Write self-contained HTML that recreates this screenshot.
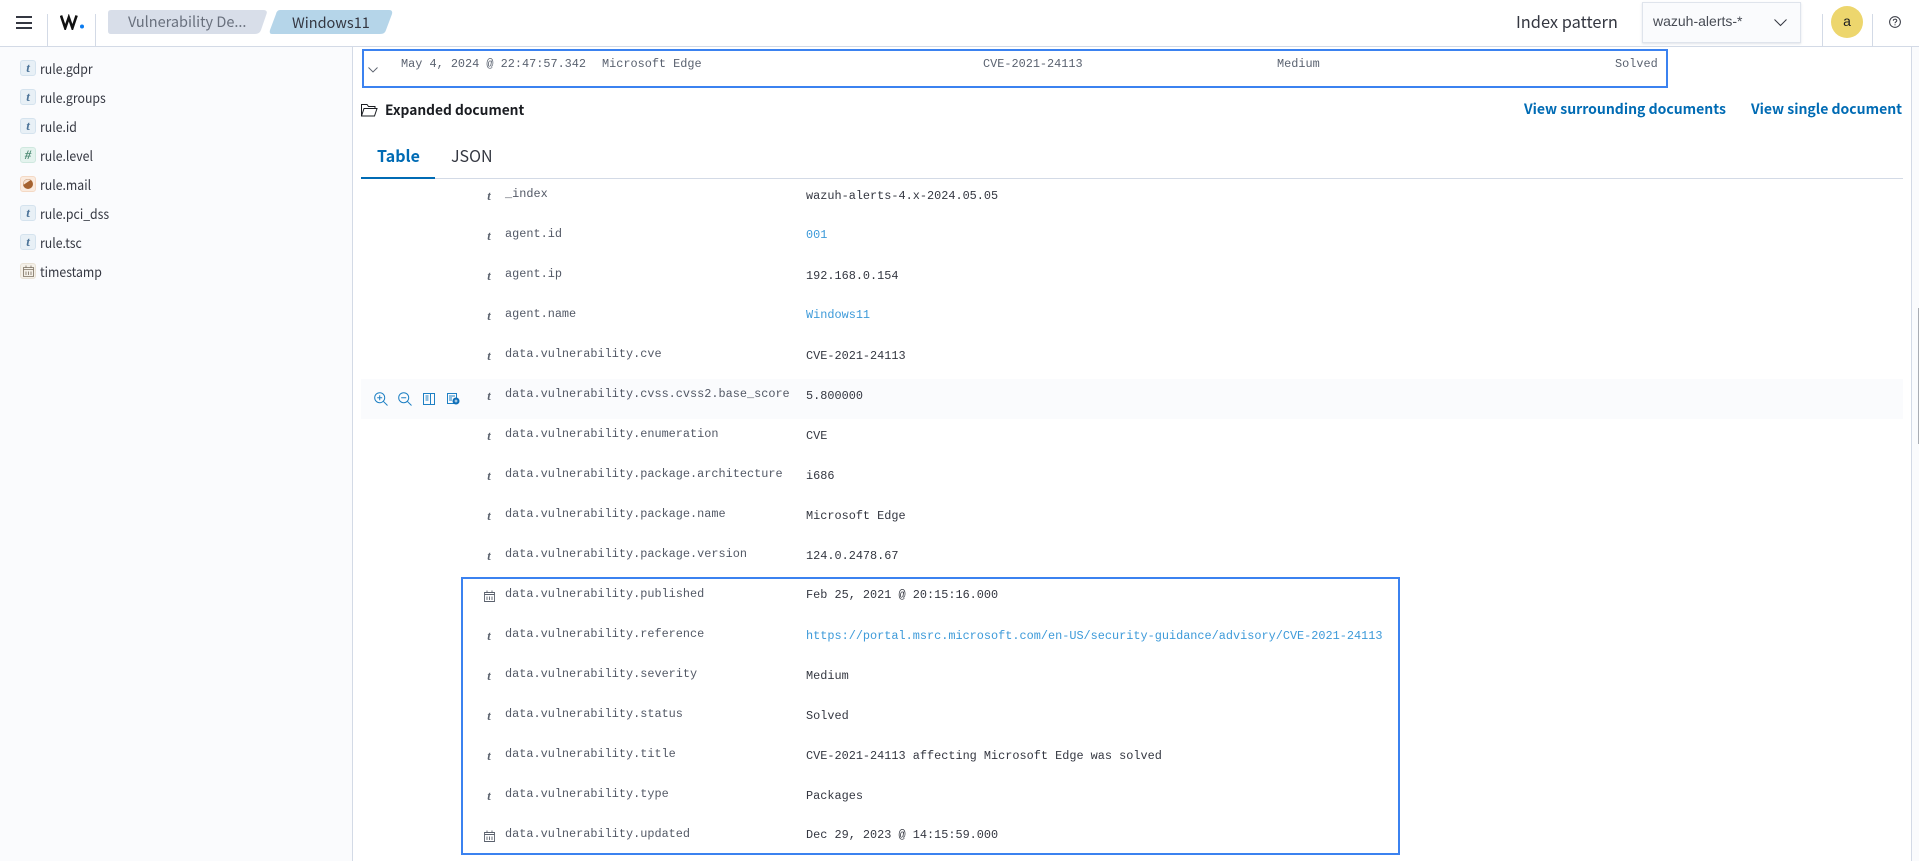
<!DOCTYPE html>
<html><head><meta charset="utf-8"><title>Discover</title>
<style>
html,body{margin:0;padding:0;background:#fff}
body{width:1919px;height:861px;overflow:hidden;position:relative;font-family:"Noto Sans CJK JP","Liberation Sans",sans-serif;color:#343741}
.a{position:absolute;white-space:nowrap}
.m{font-family:"Liberation Mono",monospace;font-size:11.87px;line-height:14px;white-space:pre}
.k{left:505px;color:#535966}
.v{left:806px;color:#343741}
.l{color:#3d9ad9}
.ti{left:486px;font:italic bold 12.5px/12px "Liberation Serif",serif;color:#5a616d;width:6px;text-align:center;transform:translateY(-1px)}
.si{position:absolute;left:20px;width:14px;height:14px;border:1px solid #d5e3ee;border-radius:3px;background:#e8f0f6;color:#4b7398;font:italic bold 13px/14px "Liberation Serif",serif;text-align:center}
.st{position:absolute;left:40px;font-size:13.5px;line-height:20px;color:#343741;transform:scaleX(.91);transform-origin:0 50%;white-space:nowrap}
.box{position:absolute;border:2px solid #3b82f0;box-sizing:border-box}
.d{position:absolute;width:1px;background:#d3dae6}
svg{position:absolute;display:block}
</style></head><body>

<!-- sidebar -->
<div class="a" style="left:0;top:47px;width:352px;height:814px;background:#fafbfd"></div>
<div class="a" style="left:352px;top:47px;width:1px;height:814px;background:#d3dae6"></div>
<div class="a" style="left:1911px;top:47px;width:1px;height:814px;background:#d3dae6"></div>
<div class="a" style="left:1912px;top:47px;width:7px;height:814px;background:#fafbfd"></div>
<div class="a" style="left:1918px;top:308px;width:1px;height:136px;background:#a9adb4"></div>

<!-- top bar -->
<div class="a" style="left:0;top:46px;width:1919px;height:1px;background:#d3dae6"></div>
<div class="a" style="left:16px;top:16px;width:16px;height:2px;background:#343741"></div>
<div class="a" style="left:16px;top:21.5px;width:16px;height:2px;background:#343741"></div>
<div class="a" style="left:16px;top:27px;width:16px;height:2px;background:#343741"></div>
<div class="d" style="left:47px;top:14px;height:32px"></div>
<div class="d" style="left:95px;top:14px;height:32px"></div>
<svg style="left:60px;top:14px" width="25" height="16" viewBox="0 0 25 16"><path d="M1 1.500 5.200 14 8.800 3.500 12.400 14 16.600 1.500" fill="none" stroke="#111" stroke-width="2.600"/><circle cx="22" cy="12.500" r="2" fill="#0a7bf0"/></svg>
<svg style="left:108px;top:10px" width="160" height="24" viewBox="0 0 160 24"><path d="M3 0H155Q160 0 158.500 4L153 20Q151.500 24 147 24H3Q0 24 0 21V3Q0 0 3 0Z" fill="#d8dee9"/></svg>
<div class="a" style="left:128px;top:11px;font-size:14.5px;line-height:22px;color:#69707d">Vulnerability De...</div>
<svg style="left:269px;top:10px" width="124" height="24" viewBox="0 0 124 24"><path d="M11 0H120Q124 0 123 4L117 20Q116 24 111 24H3Q0 24 1 20L7 4Q8 0 11 0Z" fill="#b5d5e9"/></svg>
<div class="a" style="left:292px;top:12px;font-size:14.500px;line-height:22px;color:#343741">Windows11</div>
<div class="a" style="left:1516px;top:8px;font-size:16.4px;line-height:26px;color:#343741">Index pattern</div>
<div class="a" style="left:1642px;top:2px;width:157px;height:39px;background:#fafbfd;border:1px solid #dfe4ec;box-shadow:0 1px 2px rgba(152,162,179,.3)"></div>
<div class="a" style="left:1653px;top:12px;font:14px/18px 'Liberation Sans',sans-serif;color:#484c55">wazuh-alerts-*</div>
<svg style="left:1774px;top:18px" width="13" height="9" viewBox="0 0 13 9"><path d="M.5 1.500 6.500 7.500 12.500 1.500" fill="none" stroke="#343741" stroke-width="1"/></svg>
<div class="d" style="left:1822px;top:14px;height:32px"></div>
<div class="d" style="left:1872px;top:14px;height:32px"></div>
<div class="a" style="left:1831px;top:6px;width:32px;height:32px;border-radius:50%;background:#edd66d;text-align:center;font:14px/31px 'Liberation Sans',sans-serif;color:#1a1c21">a</div>
<svg style="left:1889px;top:16px" width="12" height="12" viewBox="0 0 12 12"><circle cx="6" cy="6" r="5.400" fill="none" stroke="#343741" stroke-width="1"/><path d="M4.300 4.700C4.300 2.700 7.800 2.700 7.800 4.600 7.800 5.900 6 5.800 6 7.300" fill="none" stroke="#343741" stroke-width="1"/><rect x="5.500" y="8.300" width="1" height="1" fill="#343741"/></svg>

<!-- sidebar list -->
<div class="si" style="top:60px">t</div><div class="st" style="top:58px">rule.gdpr</div>
<div class="si" style="top:89px">t</div><div class="st" style="top:87px">rule.groups</div>
<div class="si" style="top:118px">t</div><div class="st" style="top:116px">rule.id</div>
<div class="si" style="top:147px;background:#e4f3ee;border-color:#cfe8df;color:#4c8a73">#</div><div class="st" style="top:145px">rule.level</div>
<div class="si" style="top:176px;background:#faebdf;border-color:#f4d9c4"></div>
<svg style="left:23px;top:179px" width="10" height="10" viewBox="0 0 10 10"><circle cx="5" cy="5" r="5" fill="#a5622f"/><path d="M.6 5.800A4.500 4.500 0 0 1 7.500 1.100Z" fill="#f6e3d3"/></svg>
<div class="st" style="top:174px">rule.mail</div>
<div class="si" style="top:205px">t</div><div class="st" style="top:203px">rule.pci_dss</div>
<div class="si" style="top:234px">t</div><div class="st" style="top:232px">rule.tsc</div>
<div class="si" style="top:263px;background:#f4f0e8;border-color:#e8e1d5"></div>
<svg style="left:23px;top:265px" width="11" height="12" viewBox="0 0 11 12"><path d="M.5 2.500H10.500V11.500H.5ZM.5 4.500H10.500M3 .5V3M8 .5V3M3 6.500V10M5.500 6.500V10M8 6.500V10" fill="none" stroke="#7a6f5f" stroke-width=".8"/></svg>
<div class="st" style="top:261px">timestamp</div>

<!-- selected row -->
<div class="box" style="left:362px;top:49px;width:1306px;height:39px"></div>
<svg style="left:368px;top:67px" width="10" height="6" viewBox="0 0 10 6"><path d="M.5 .5 5 5 9.500 .5" fill="none" stroke="#5a616d" stroke-width=".9"/></svg>
<div class="a m" style="left:401px;top:57px;color:#5a6270">May 4, 2024 @ 22:47:57.342</div>
<div class="a m" style="left:602px;top:57px;color:#5a6270">Microsoft Edge</div>
<div class="a m" style="left:983px;top:57px;color:#5a6270">CVE-2021-24113</div>
<div class="a m" style="left:1277px;top:57px;color:#5a6270">Medium</div>
<div class="a m" style="left:1615px;top:57px;color:#5a6270">Solved</div>

<!-- expanded header -->
<svg style="left:361px;top:103px" width="17" height="14" viewBox="0 0 17 14"><path d="M.5 13V1.500H6L7.500 3.500H14V5.500M.5 13H13.500L16 5.500H3L.5 13Z" fill="none" stroke="#1a1c21" stroke-width="1"/></svg>
<div class="a" style="left:385px;top:98.5px;font-size:13.75px;line-height:20px;font-weight:700;color:#1a1c21">Expanded document</div>
<div class="a" style="left:1524px;top:98.5px;font-size:14px;line-height:20px;font-weight:700;color:#006bb4">View surrounding documents</div>
<div class="a" style="left:1751px;top:98.5px;font-size:14px;line-height:20px;font-weight:700;color:#006bb4">View single document</div>

<!-- tabs -->
<div class="a" style="left:361px;top:177.500px;width:1542px;height:1px;background:#d3dae6"></div>
<div class="a" style="left:361px;top:176.500px;width:74px;height:2px;background:#006bb4"></div>
<div class="a" style="left:377px;top:143px;font-size:16px;line-height:24px;font-weight:700;color:#006bb4">Table</div>
<div class="a" style="left:451px;top:143px;font-size:16px;line-height:24px;color:#343741">JSON</div>

<!-- hover row -->
<div class="a" style="left:361px;top:379px;width:1542px;height:40px;background:#fafbfd"></div>
<svg style="left:374px;top:392px" width="14" height="14" viewBox="0 0 14 14" fill="none" stroke="#1e80c4" stroke-width="1"><circle cx="5.700" cy="5.700" r="5"/><path d="M9.300 9.300 13.500 13.500M3.200 5.700H8.200M5.700 3.200V8.200"/></svg>
<svg style="left:398px;top:392px" width="14" height="14" viewBox="0 0 14 14" fill="none" stroke="#1e80c4" stroke-width="1"><circle cx="5.700" cy="5.700" r="5"/><path d="M9.300 9.300 13.500 13.500M3.200 5.700H8.200"/></svg>
<svg style="left:423px;top:393px" width="12" height="12" viewBox="0 0 12 12" fill="none" stroke="#1e80c4" stroke-width="1"><path d="M.5.500H11.500V11.500H.5ZM7.500.5V11.500M2.500 3H5.500M2.500 5H5.500M2.500 7H5.500"/></svg>
<svg style="left:447px;top:393px" width="13" height="12" viewBox="0 0 13 12"><path d="M.5.500H9.500V10.500H.5ZM2 3H8M2 5H5M2 7H5" fill="none" stroke="#1e80c4" stroke-width="1"/><circle cx="9" cy="8" r="3.500" fill="#0f6fb8"/><path d="M7.500 8H10.500M9 6.500V9.500" stroke="#fff" stroke-width=".8"/></svg>

<!-- rows -->
<div class="a ti" style="top:191px">t</div><div class="a m k" style="top:187px">_index</div><div class="a m v" style="top:189px">wazuh-alerts-4.x-2024.05.05</div>
<div class="a ti" style="top:231px">t</div><div class="a m k" style="top:227px">agent.id</div><div class="a m v l" style="top:228px">001</div>
<div class="a ti" style="top:271px">t</div><div class="a m k" style="top:267px">agent.ip</div><div class="a m v" style="top:269px">192.168.0.154</div>
<div class="a ti" style="top:311px">t</div><div class="a m k" style="top:307px">agent.name</div><div class="a m v l" style="top:308px">Windows11</div>
<div class="a ti" style="top:351px">t</div><div class="a m k" style="top:347px">data.vulnerability.cve</div><div class="a m v" style="top:349px">CVE-2021-24113</div>
<div class="a ti" style="top:391px">t</div><div class="a m k" style="top:387px">data.vulnerability.cvss.cvss2.base_score</div><div class="a m v" style="top:389px">5.800000</div>
<div class="a ti" style="top:431px">t</div><div class="a m k" style="top:427px">data.vulnerability.enumeration</div><div class="a m v" style="top:429px">CVE</div>
<div class="a ti" style="top:471px">t</div><div class="a m k" style="top:467px">data.vulnerability.package.architecture</div><div class="a m v" style="top:469px">i686</div>
<div class="a ti" style="top:511px">t</div><div class="a m k" style="top:507px">data.vulnerability.package.name</div><div class="a m v" style="top:509px">Microsoft Edge</div>
<div class="a ti" style="top:551px">t</div><div class="a m k" style="top:547px">data.vulnerability.package.version</div><div class="a m v" style="top:549px">124.0.2478.67</div>

<div class="box" style="left:461px;top:577px;width:938.500px;height:278px"></div>

<svg style="left:484px;top:590px" width="11" height="12" viewBox="0 0 11 12"><path d="M.5 2.500H10.500V11.500H.5ZM.5 4.500H10.500M3 .5V3M8 .5V3M3 6.500V10M5.500 6.500V10M8 6.500V10" fill="none" stroke="#5a616d" stroke-width=".9"/></svg>
<div class="a m k" style="top:587px">data.vulnerability.published</div><div class="a m v" style="top:588px">Feb 25, 2021 @ 20:15:16.000</div>
<div class="a ti" style="top:631px">t</div><div class="a m k" style="top:627px">data.vulnerability.reference</div><div class="a m v l" style="top:629px">https://portal.msrc.microsoft.com/en-US/security-guidance/advisory/CVE-2021-24113</div>
<div class="a ti" style="top:671px">t</div><div class="a m k" style="top:667px">data.vulnerability.severity</div><div class="a m v" style="top:669px">Medium</div>
<div class="a ti" style="top:711px">t</div><div class="a m k" style="top:707px">data.vulnerability.status</div><div class="a m v" style="top:709px">Solved</div>
<div class="a ti" style="top:751px">t</div><div class="a m k" style="top:747px">data.vulnerability.title</div><div class="a m v" style="top:749px">CVE-2021-24113 affecting Microsoft Edge was solved</div>
<div class="a ti" style="top:791px">t</div><div class="a m k" style="top:787px">data.vulnerability.type</div><div class="a m v" style="top:789px">Packages</div>
<svg style="left:484px;top:830px" width="11" height="12" viewBox="0 0 11 12"><path d="M.5 2.500H10.500V11.500H.5ZM.5 4.500H10.500M3 .5V3M8 .5V3M3 6.500V10M5.500 6.500V10M8 6.500V10" fill="none" stroke="#5a616d" stroke-width=".9"/></svg>
<div class="a m k" style="top:827px">data.vulnerability.updated</div><div class="a m v" style="top:828px">Dec 29, 2023 @ 14:15:59.000</div>

</body></html>
